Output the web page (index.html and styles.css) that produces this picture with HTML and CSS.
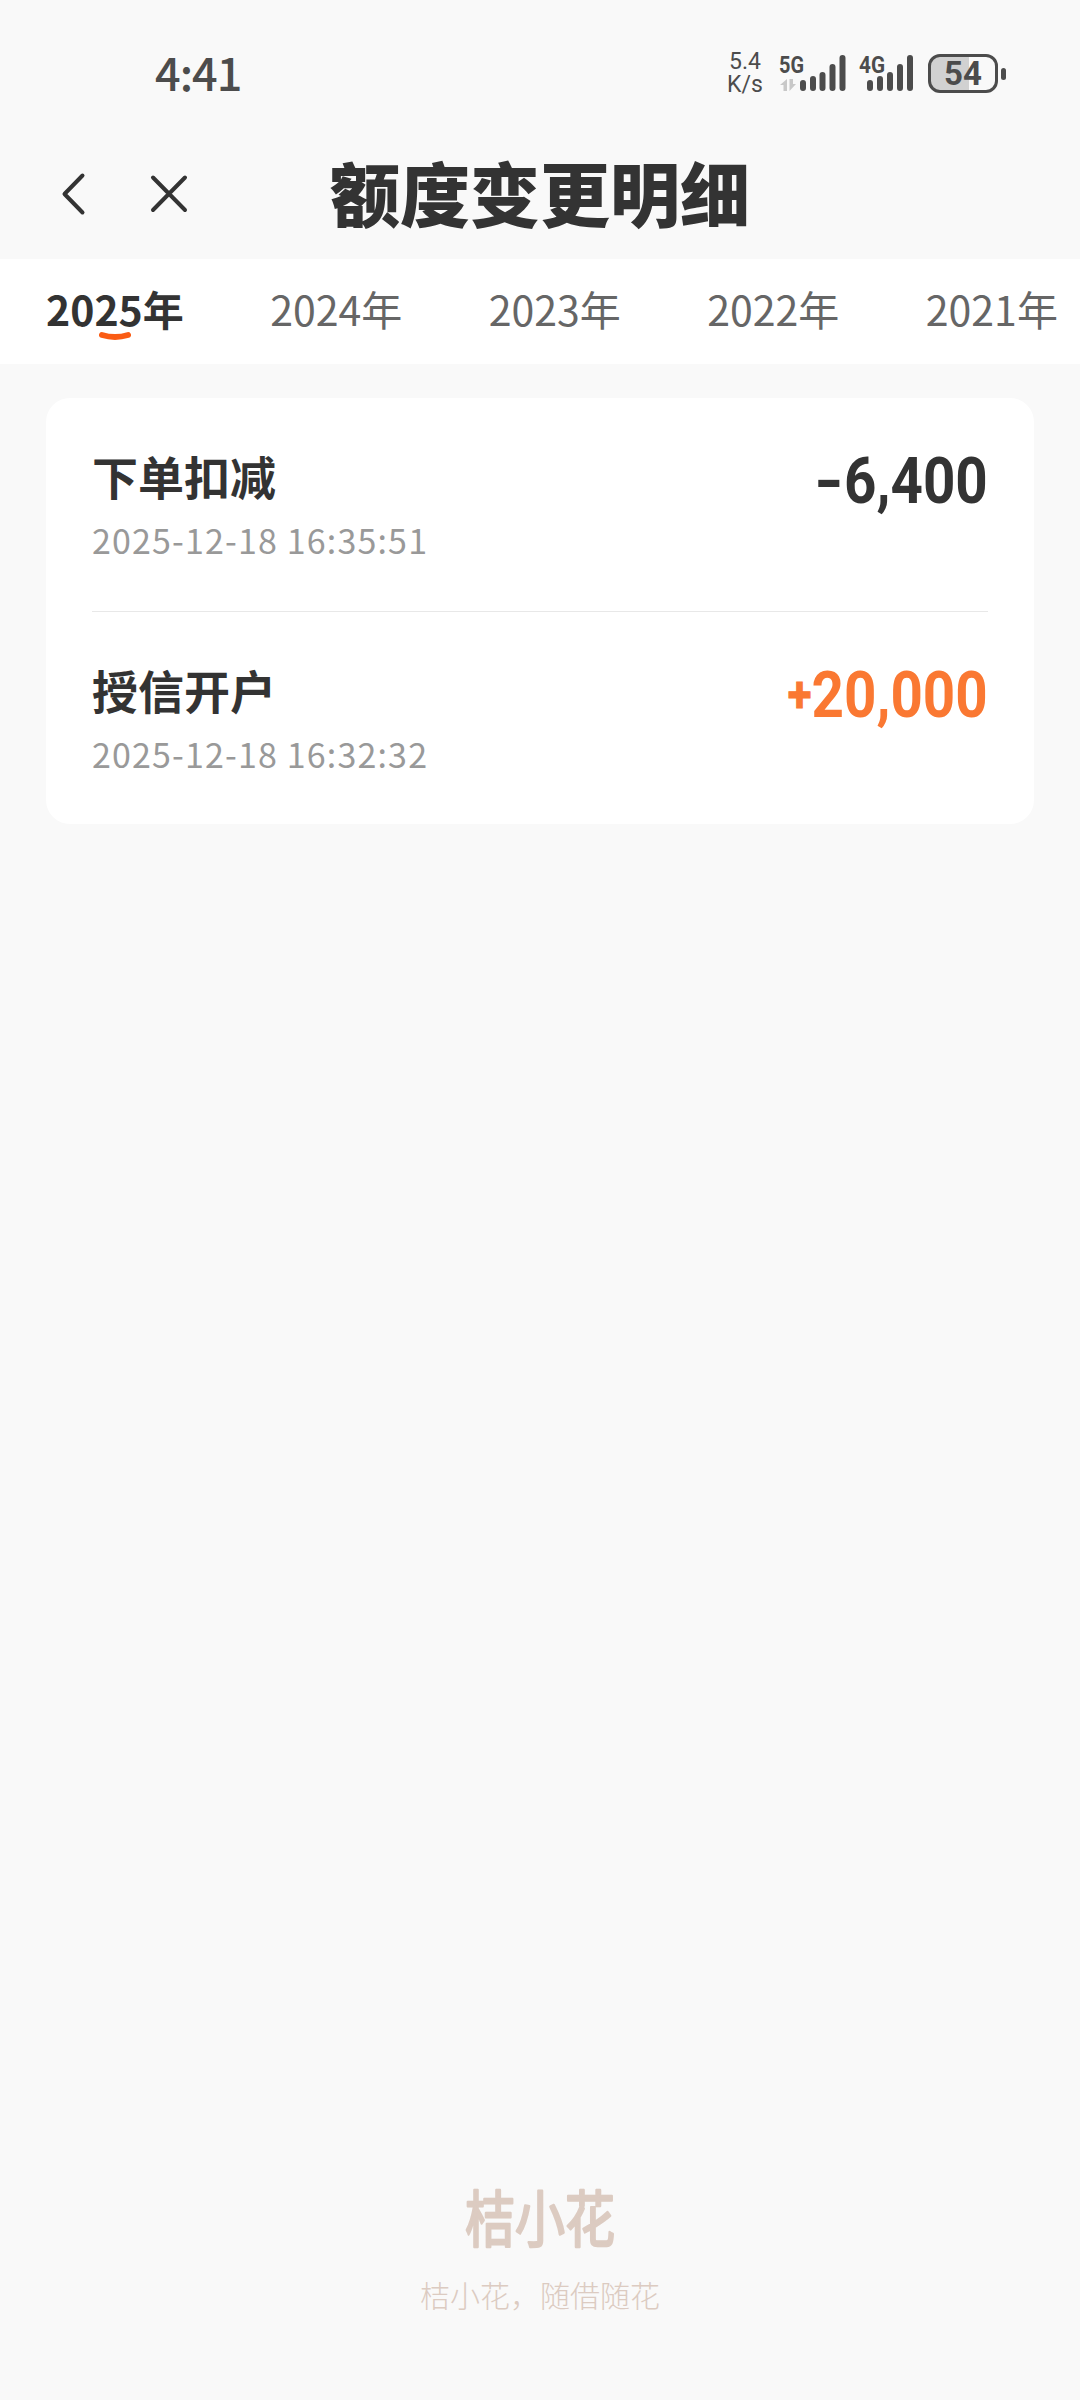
FILE: index.html
```html
<!DOCTYPE html>
<html lang="zh-CN">
<head>
<meta charset="UTF-8">
<meta name="viewport" content="width=device-width, initial-scale=1.0">
<title>额度变更明细</title>
<link rel="stylesheet" href="styles.css">
</head>
<body>
  <div class="status-bar">
    <span class="time">4:41</span>
    <div class="status-right">
      <div class="speed"><span>5.4</span><span>K/s</span></div>

      <svg class="signal" width="68" height="40" viewBox="0 0 68 40">
        <text x="0" y="19.500" textLength="25" lengthAdjust="spacingAndGlyphs">5G</text>
        <path class="arrows" d="M8 26V38H4.500V32H1ZM10.500 26V38L17 31H14V26Z"/>
        <path class="bars" d="M24 30v5M34 26v9M43.500 22v13M53.500 14v21M63.500 5v30"/>
      </svg>

      <svg class="signal" width="57" height="40" viewBox="0 0 57 40">
        <text x="0" y="19.500" textLength="26" lengthAdjust="spacingAndGlyphs">4G</text>
        <path class="bars" d="M11 30v5M21 26v9M31 22v13M41 14v21M51 5v30"/>
      </svg>

      <div class="battery"><span>54</span></div>
    </div>
  </div>

  <div class="nav">
    <svg class="nav-icons" width="140" height="60" viewBox="0 0 140 60">
      <path d="M36.500 11.500L18.500 30L36.500 48.500"/>
      <path d="M107 13.500L139 46M139 13.500L107 46"/>
    </svg>
    <h1>额度变更明细</h1>
  </div>

  <div class="tabs">
    <div class="tab active">2025年
      <svg class="smile" width="34" height="12" viewBox="0 0 34 12"><path d="M4 4Q17 8 30 4"/></svg>
    </div>
    <div class="tab">2024年</div>
    <div class="tab">2023年</div>
    <div class="tab">2022年</div>
    <div class="tab">2021年</div>
  </div>

  <div class="card">
    <div class="record">
      <div>
        <div class="name">下单扣减</div>
        <div class="date">2025-12-18 16:35:51</div>
      </div>
      <div class="amount"><span class="sign">-</span>6,400</div>
    </div>
    <div class="record">
      <div>
        <div class="name">授信开户</div>
        <div class="date">2025-12-18 16:32:32</div>
      </div>
      <div class="amount plus"><span class="sign">+</span>20,000</div>
    </div>
  </div>

  <div class="footer">
    <svg class="logo" width="160" height="80" viewBox="0 0 160 80">
      <text x="5" y="64" textLength="150" lengthAdjust="spacingAndGlyphs">桔小花</text>
    </svg>
    <div class="slogan">桔小花，随借随花</div>
  </div>
</body>
</html>
```
FILE: styles.css
```css
* {
  box-sizing: border-box;
}

body {
  margin: 0;
  height: 2400px;
  display: flex;
  flex-direction: column;
  overflow: hidden;
  background: #f9f9f9;
  color: #333;
  font-family: "Noto Sans CJK SC", sans-serif;
}

/* status bar */
.status-bar {
  height: 130px;
  padding: 16px 74px 0 155px;
  display: flex;
  align-items: center;
  justify-content: space-between;
  color: #4c4c4c;
}

.time {
  margin-top: -3px;
  font-size: 45px;
  font-weight: 500;
  line-height: 60px;
  letter-spacing: -1px;
}

.status-right {
  display: flex;
  align-items: center;
}

.speed {
  width: 36px;
  margin-right: 16px;
  display: flex;
  flex-direction: column;
  align-items: center;
  font: 23px/23px Roboto, sans-serif;
}

.signal {
  margin-right: 12px;
  overflow: visible;
}

.signal text {
  fill: #4c4c4c;
  font: bold 24px Roboto, sans-serif;
}

.bars {
  fill: none;
  stroke: #4c4c4c;
  stroke-width: 6;
  stroke-linecap: round;
}

.arrows {
  fill: #c8c8c8;
}

.battery {
  position: relative;
  width: 70px;
  height: 39px;
  margin-right: 8px;
  border: 3px solid #4c4c4c;
  border-radius: 12px;
  background: linear-gradient(to right, #d1d1d1 38px, #f9f9f9 38px);
  font: bold 33px/34px Roboto, sans-serif;
  text-align: center;
}

.battery::after {
  content: "";
  position: absolute;
  right: -11px;
  top: 11px;
  width: 5px;
  height: 12px;
  border-radius: 3px;
  background: #4c4c4c;
}

/* title */
.nav {
  position: relative;
  height: 129px;
  display: flex;
  justify-content: center;
}

.nav-icons {
  position: absolute;
  left: 46px;
  top: 34px;
  fill: none;
  stroke: #333;
  stroke-width: 4;
  stroke-linecap: round;
  stroke-linejoin: round;
  overflow: visible;
}

.nav h1 {
  margin: 0;
  font-size: 70px;
  font-weight: 900;
  line-height: 123px;
}

/* years */
.tabs {
  height: 105px;
  padding-left: 46px;
  display: flex;
  gap: 86.5px;
  background: #fff;
  font-size: 41px;
  line-height: 98px;
  color: #666;
  white-space: nowrap;
}

.tab {
  position: relative;
}

.tab.active {
  color: #333;
  font-weight: 700;
}

.smile {
  position: absolute;
  left: 52px;
  top: 72px;
  fill: none;
  stroke: #fa5c14;
  stroke-width: 6;
  stroke-linecap: round;
}

/* records */
.card {
  margin: 34px 46px 0;
  padding: 0 46px;
  border-radius: 24px;
  background: #fff;
}

.record {
  height: 213px;
  padding-top: 45px;
  display: flex;
  justify-content: space-between;
}

.record + .record {
  border-top: 1px solid #e8e8e8;
}

.name {
  font-size: 46px;
  font-weight: 700;
  line-height: 64px;
}

.date {
  margin-top: 8px;
  font-size: 34px;
  line-height: 50px;
  letter-spacing: 1.15px;
  color: #999;
}

.amount {
  font: bold 65px/76px Roboto, sans-serif;
  transform: scaleX(0.87);
  transform-origin: right;
}

.sign {
  display: inline-block;
  transform: scaleX(1.35);
  transform-origin: right;
}

.amount.plus {
  color: #fa7832;
}

.plus .sign {
  font-size: 50px;
  line-height: 50px;
  transform: translateY(-5px);
  -webkit-text-stroke: 1px #fa7832;
}

/* brand */
.footer {
  margin-top: auto;
  height: 222px;
  text-align: center;
  color: #dccbc1;
}

.logo {
  display: block;
  margin: 0 auto;
  overflow: visible;
}

.logo text {
  fill: #dccbc1;
  stroke: #dccbc1;
  stroke-width: 2.5;
  stroke-linejoin: round;
  font-size: 61px;
}

.slogan {
  margin-top: 14px;
  font-size: 30px;
  font-weight: 300;
  line-height: 44px;
}
```
